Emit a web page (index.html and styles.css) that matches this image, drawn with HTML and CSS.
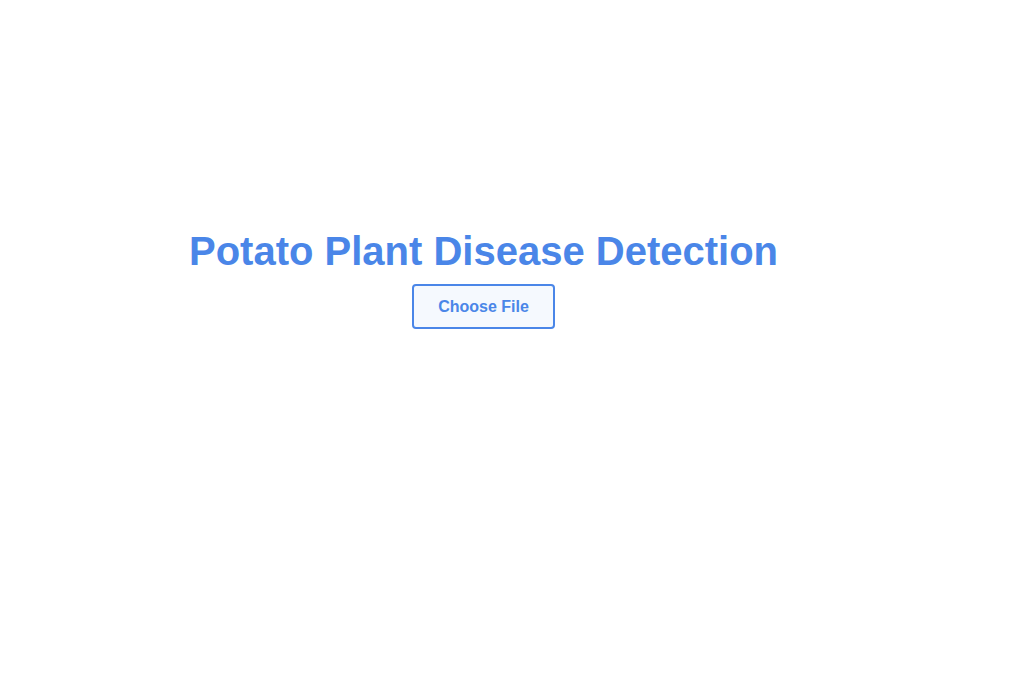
FILE: index.html
```html
<!DOCTYPE html>
<html lang="en">
<head>
<meta charset="utf-8">
<title>Potato Plant Disease Detection</title>
<link rel="stylesheet" href="styles.css">
</head>
<body>
<main class="app">
  <h1 class="title">Potato Plant Disease Detection</h1>
  <label class="upload">
    <input type="file" class="upload-input">
    <span class="upload-btn">Choose File</span>
  </label>
</main>
</body>
</html>
```

FILE: styles.css
```css
html, body {
  margin: 0;
  padding: 0;
  background: #ffffff;
}
body {
  font-family: "Liberation Sans", Arial, sans-serif;
}
.app {
  width: 967px;
  display: flex;
  flex-direction: column;
  align-items: center;
  padding-top: 228px;
}
.title {
  margin: 0;
  font-size: 40px;
  font-weight: 700;
  line-height: 46px;
  color: #4a86e8;
}
.upload {
  margin-top: 10px;
  display: block;
}
.upload-input {
  display: none;
}
.upload-btn {
  display: flex;
  align-items: center;
  justify-content: center;
  box-sizing: border-box;
  width: 143px;
  height: 45px;
  border: 2px solid #4a86e8;
  border-radius: 4px;
  background: #f5f9fe;
  color: #4a86e8;
  font-size: 16px;
  font-weight: 700;
  cursor: pointer;
}
```
